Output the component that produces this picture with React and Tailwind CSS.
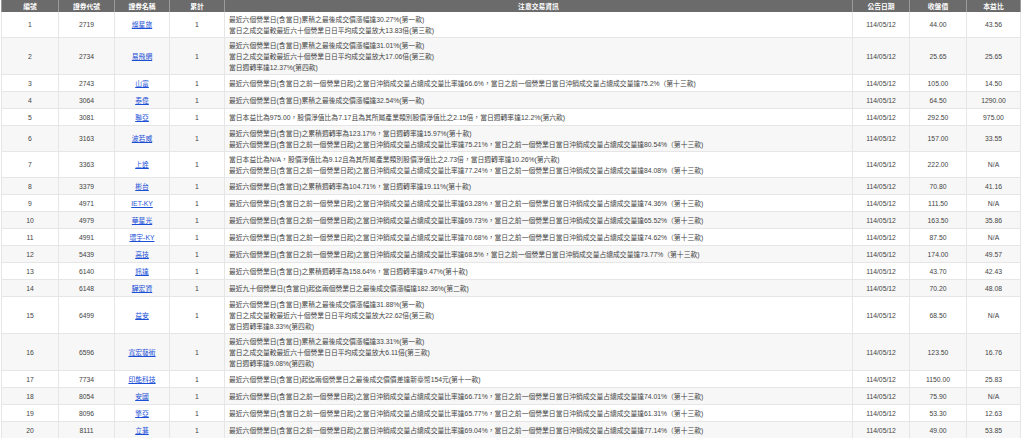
const T13 = (a, b) => `最近六個營業日(含當日之前一個營業日起)之當日沖銷成交量占總成交量比率達${a}%，當日之前一個營業日當日沖銷成交量占總成交量達${b}%（第十三款)`;
const rows = [
  [1, "2719", "燦星旅", ["最近六個營業日(含當日)累積之最後成交價漲幅達30.27%(第一款)", "當日之成交量較最近六十個營業日日平均成交量放大13.83倍(第三款)"], "44.00", "43.56"],
  [2, "2734", "易飛網", ["最近六個營業日(含當日)累積之最後成交價漲幅達31.01%(第一款)", "當日之成交量較最近六十個營業日日平均成交量放大17.06倍(第三款)", "當日週轉率達12.37%(第四款)"], "25.65", "25.65"],
  [3, "2743", "山富", ["最近六個營業日(含當日之前一個營業日起)之當日沖銷成交量占總成交量比率達66.6%，當日之前一個營業日當日沖銷成交量占總成交量達75.2%（第十三款)"], "105.00", "14.50"],
  [4, "3064", "泰偉", ["最近六個營業日(含當日)累積之最後成交價漲幅達32.54%(第一款)"], "64.50", "1290.00"],
  [5, "3081", "聯亞", ["當日本益比為975.00，股價淨值比為7.17且為其所屬產業類別股價淨值比之2.15倍，當日週轉率達12.2%(第六款)"], "292.50", "975.00"],
  [6, "3163", "波若威", ["最近六個營業日(含當日)之累積週轉率為123.17%，當日週轉率達15.97%(第十款)", T13("75.21", "80.54")], "157.00", "33.55"],
  [7, "3363", "上詮", ["當日本益比為N/A，股價淨值比為9.12且為其所屬產業類別股價淨值比之2.73倍，當日週轉率達10.26%(第六款)", T13("77.24", "84.08")], "222.00", "N/A"],
  [8, "3379", "彬台", ["最近六個營業日(含當日)之累積週轉率為104.71%，當日週轉率達19.11%(第十款)"], "70.80", "41.16"],
  [9, "4971", "IET-KY", [T13("63.28", "74.36")], "111.50", "N/A"],
  [10, "4979", "華星光", [T13("69.73", "65.52")], "163.50", "35.86"],
  [11, "4991", "環宇-KY", [T13("70.68", "74.62")], "87.50", "N/A"],
  [12, "5439", "高技", [T13("68.5", "73.77")], "174.00", "49.57"],
  [13, "6140", "訊達", ["最近六個營業日(含當日)之累積週轉率為158.64%，當日週轉率達9.47%(第十款)"], "43.70", "42.43"],
  [14, "6148", "驊宏資", ["最近九十個營業日(含當日)起迄兩個營業日之最後成交價漲幅達182.36%(第二款)"], "70.20", "48.08"],
  [15, "6499", "益安", ["最近六個營業日(含當日)累積之最後成交價漲幅達31.88%(第一款)", "當日之成交量較最近六十個營業日日平均成交量放大22.62倍(第三款)", "當日週轉率達8.33%(第四款)"], "68.50", "N/A"],
  [16, "6596", "寬宏藝術", ["最近六個營業日(含當日)累積之最後成交價漲幅達33.31%(第一款)", "當日之成交量較最近六十個營業日日平均成交量放大6.11倍(第三款)", "當日週轉率達9.08%(第四款)"], "123.50", "16.76"],
  [17, "7734", "印能科技", ["最近六個營業日(含當日)起迄兩個營業日之最後成交價價差達新臺幣154元(第十一款)"], "1150.00", "25.83"],
  [18, "8054", "安國", [T13("66.71", "74.01")], "75.90", "N/A"],
  [19, "8096", "擎亞", [T13("65.77", "61.31")], "53.30", "12.63"],
  [20, "8111", "立碁", [T13("69.04", "77.14")], "49.00", "53.85"],
];
const heads = ["編號", "證券代號", "證券名稱", "累計", "注意交易資訊", "公告日期", "收盤價", "本益比"];
const widths = ["w-[57px]", "w-[56px]", "w-[55px]", "w-[55px]", "", "w-[57px]", "w-[57px]", "w-[54px]"];
export default function App() {
  return (
    <div className="w-[1024px] h-[438px] overflow-hidden bg-white pl-[1px] pr-[3px]" style={{ fontFamily: '"Liberation Sans", "Noto Sans CJK TC", sans-serif' }}>
      <table className="w-full table-fixed border-collapse text-[6.8px] leading-[11px] text-[#444]">
        <colgroup>{widths.map((w, i) => <col key={i} className={w} />)}</colgroup>
        <thead>
          <tr className="h-[12px] bg-[#6b6b6b] text-white font-bold">
            {heads.map((h) => <th key={h} className="border-x border-[#9a9a9a] py-0 text-center font-bold">{h}</th>)}
          </tr>
        </thead>
        <tbody>
          {rows.map((r, i) => (
            <tr key={r[0]} className={`h-[17px] border-b border-[#e6e6e6] ${i % 2 ? "bg-[#f7f7f7]" : "bg-white"}`}>
              <td className="border-x border-[#e6e6e6] text-center py-[1.5px]">{r[0]}</td>
              <td className="border-x border-[#e6e6e6] text-center">{r[1]}</td>
              <td className="border-x border-[#e6e6e6] text-center"><a className="text-[#1a4fd6] underline">{r[2]}</a></td>
              <td className="border-x border-[#e6e6e6] text-center">1</td>
              <td className="border-x border-[#e6e6e6] px-[4px] py-[1.5px] whitespace-nowrap">{r[3].map((l, j) => <div key={j}>{l}</div>)}</td>
              <td className="border-x border-[#e6e6e6] text-center">114/05/12</td>
              <td className="border-x border-[#e6e6e6] text-center">{r[4]}</td>
              <td className="border-x border-[#e6e6e6] text-center">{r[5]}</td>
            </tr>
          ))}
        </tbody>
      </table>
    </div>
  );
}
